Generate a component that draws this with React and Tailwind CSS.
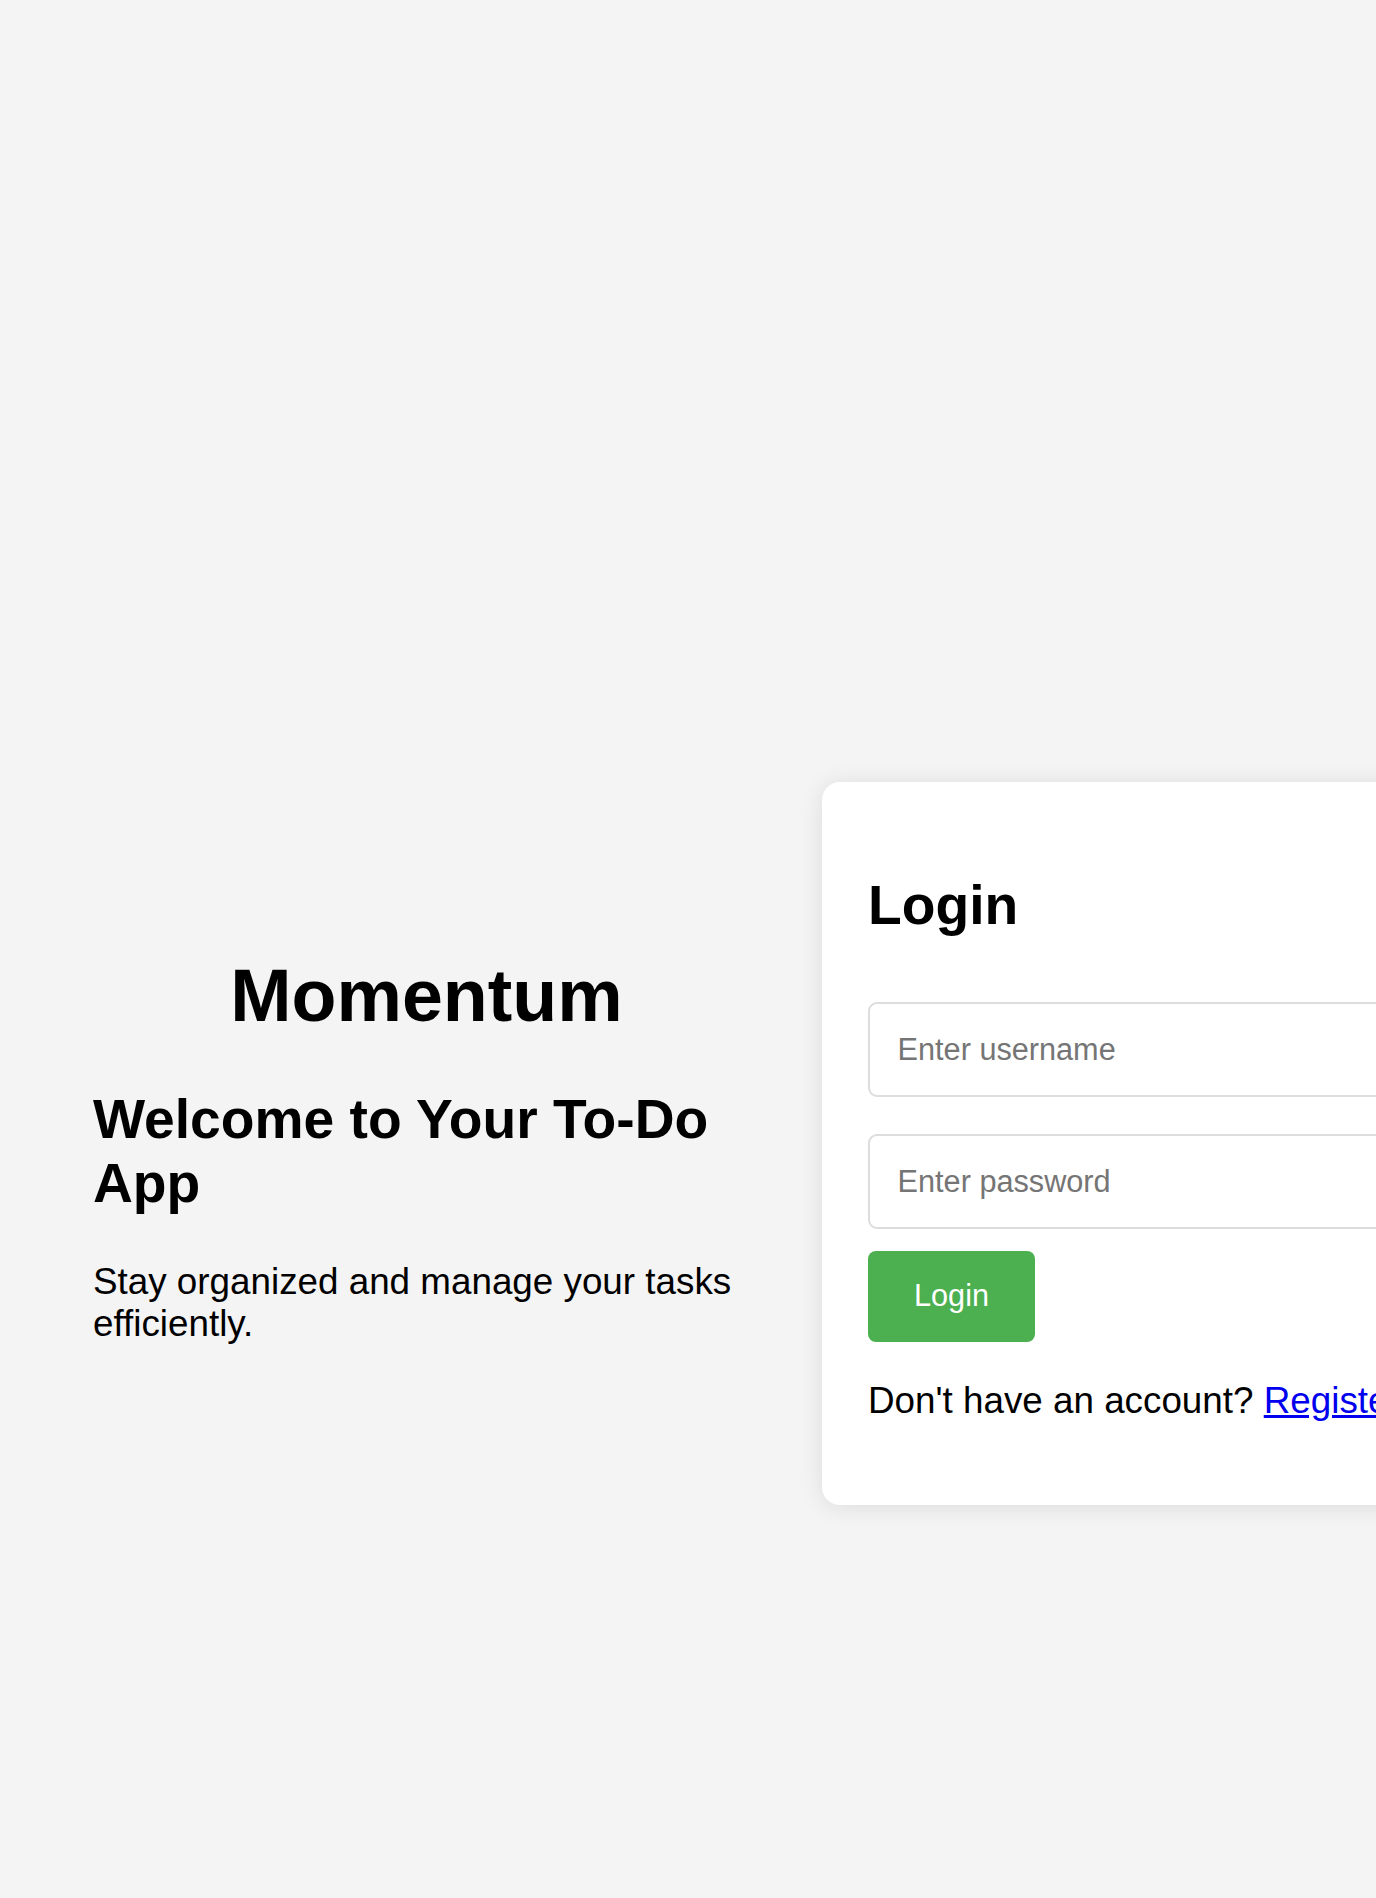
import React from "react";

export default function App() {
  return (
    <div
      className="w-full min-h-[1898px] bg-[#f4f4f4] flex items-center pt-[389px] overflow-hidden text-black"
      style={{ fontFamily: '"Liberation Sans", Arial, Helvetica, sans-serif' }}
    >
      <div className="shrink-0 w-[667px] ml-[93px]">
        <h1 className="text-[73.6px] font-bold leading-[1.15] text-center mt-[49.3px] mb-[49.3px]">
          Momentum
        </h1>
        <h2 className="text-[55.2px] font-bold leading-[1.15] mt-[45.8px] mb-[45.8px]">
          Welcome to Your To-Do App
        </h2>
        <p className="text-[36.8px] leading-[1.15] mt-[36.8px] mb-[36.8px]">
          Stay organized and manage your tasks efficiently.
        </p>
      </div>

      <div className="shrink-0 w-[920px] ml-[62px] bg-white rounded-[18px] shadow-[0_2px_23px_rgba(0,0,0,0.1)] p-[46px] flex flex-col items-start">
        <h2 className="text-[55.2px] font-bold leading-[1.15] mt-[45.8px] mb-[45.8px]">
          Login
        </h2>
        <input
          type="text"
          placeholder="Enter username"
          className="block w-full h-[95px] mt-[18.4px] px-[27.6px] border-[2px] border-[#dddddd] rounded-[9px] text-[30.67px] bg-white outline-none placeholder:text-[#757575]"
        />
        <input
          type="password"
          placeholder="Enter password"
          className="block w-full h-[95px] mt-[36.8px] px-[27.6px] border-[2px] border-[#dddddd] rounded-[9px] text-[30.67px] bg-white outline-none placeholder:text-[#757575]"
        />
        <button
          type="button"
          className="mt-[22px] h-[91px] px-[46px] bg-[#4caf50] text-white rounded-[8px] text-[30.67px] leading-[1.15]"
        >
          Login
        </button>
        <p className="mt-[38px] mb-[36.8px] text-[36.8px] leading-[1.15] whitespace-nowrap">
          Don't have an account?{" "}
          <a href="#" className="text-[#0000ee] underline">
            Register
          </a>
        </p>
      </div>
    </div>
  );
}
